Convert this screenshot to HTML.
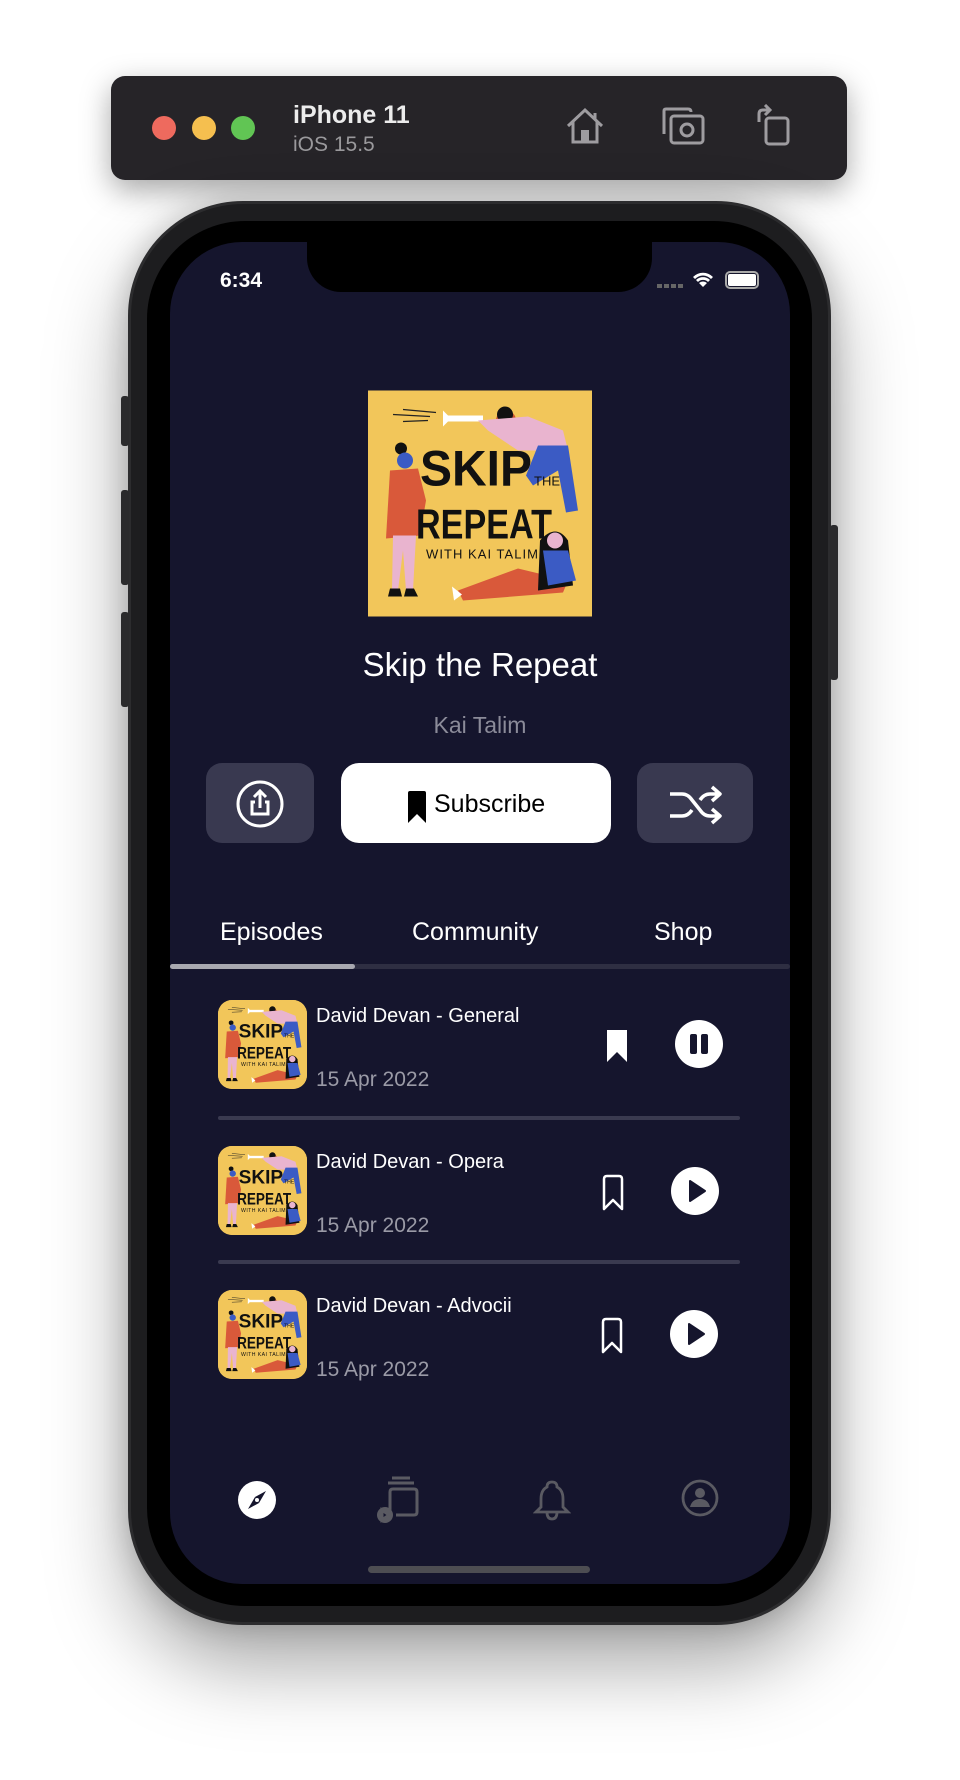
<!DOCTYPE html>
<html><head><meta charset="utf-8"><style>
*{margin:0;padding:0;box-sizing:border-box}
body{width:960px;height:1780px;background:#fff;position:relative;overflow:hidden;font-family:"Liberation Sans",sans-serif}
.abs{position:absolute}
.tb{left:111px;top:76px;width:736px;height:104px;background:#262428;border-radius:14px;box-shadow:0 10px 30px rgba(0,0,0,.35)}
.dot{width:24px;height:24px;border-radius:50%;top:116px}
.phone{left:128px;top:201px;width:703px;height:1424px;border-radius:115px;background:#1d1d1f;border:3px solid #2c2c2e;box-shadow:0 40px 80px rgba(0,0,0,.35),0 0 30px rgba(0,0,0,.2)}
.bez{left:147px;top:221px;width:665px;height:1385px;border-radius:98px;background:#000}
.scr{left:170px;top:242px;width:620px;height:1342px;border-radius:72px;background:#15152d;overflow:hidden}
.btn{background:#393950;border-radius:16px;top:763px;height:80px}
.t{color:#fff;white-space:nowrap}
.thumb{width:89px;height:89px;border-radius:14px;overflow:hidden;background:#f2c65a}
.ttl{font-size:20px;color:#fff}
.dt{font-size:21px;color:#9a9aa6}
.sep{left:218px;width:522px;height:4px;background:#3a3a50;border-radius:2px}
</style></head><body>
<svg width="0" height="0" style="position:absolute"><defs>
<symbol id="art" viewBox="0 0 224 226">
<rect width="224" height="226" fill="#f2c65a"/>
<g stroke="#222" stroke-width="1.2"><line x1="25" y1="24" x2="62" y2="26"/><line x1="35" y1="19" x2="68" y2="22"/><line x1="35" y1="31" x2="60" y2="30"/></g>
<path d="M75 20 L83 28 L75 36 Z" fill="#fff"/><rect x="80" y="25" width="35" height="6" fill="#fff"/>
<circle cx="138" cy="30" r="10" fill="#c9542e"/><circle cx="137" cy="24" r="8" fill="#111"/>
<path d="M110 30 L160 26 L195 40 L200 60 L150 60 L120 40Z" fill="#e9b4cf"/>
<path d="M170 55 L200 55 L210 120 L198 122 L190 80 L165 95 L158 85Z" fill="#3b5bc4"/>
<circle cx="33" cy="58" r="6" fill="#111"/><circle cx="37" cy="70" r="8" fill="#3b5bc4"/>
<path d="M22 80 L50 78 L58 110 L52 145 L18 148Z" fill="#d9593a"/>
<path d="M25 145 L48 145 L45 200 L38 200 L35 160 L30 200 L24 200Z" fill="#e9b4cf"/>
<path d="M22 198 L32 198 L34 206 L20 206Z M38 198 L46 198 L50 206 L36 206Z" fill="#111"/>
<text x="52" y="95" font-family="Liberation Sans,sans-serif" font-weight="bold" font-size="50" fill="#111" textLength="112" lengthAdjust="spacingAndGlyphs">SKIP</text>
<text x="166" y="95" font-family="Liberation Sans,sans-serif" font-size="13" fill="#111">THE</text>
<text x="48" y="148" font-family="Liberation Sans,sans-serif" font-weight="bold" font-size="42" fill="#111" textLength="136" lengthAdjust="spacingAndGlyphs">REPEAT</text>
<text x="58" y="168" font-family="Liberation Sans,sans-serif" font-size="13" fill="#111" textLength="112" lengthAdjust="spacing">WITH KAI TALIM</text>
<path d="M90 200 L150 178 L200 190 L195 202 L95 210Z" fill="#d9593a"/>
<path d="M172 150 Q188 132 200 150 L205 195 L170 200Z" fill="#111"/><circle cx="187" cy="150" r="8" fill="#e9b4cf"/>
<path d="M175 160 L200 160 L208 190 L180 195Z" fill="#3b5bc4"/>
<path d="M84 196 L94 204 L86 210Z" fill="#fff"/>
</symbol></defs></svg>

<div class="abs tb"></div>
<div class="abs dot" style="left:152px;background:#ee6a5e"></div>
<div class="abs dot" style="left:192px;background:#f5bf4f"></div>
<div class="abs dot" style="left:231px;background:#61c554"></div>
<div class="abs t" style="left:293px;top:101px;font-size:25px;font-weight:bold;color:#ececec">iPhone 11</div>
<div class="abs t" style="left:293px;top:133px;font-size:21px;color:#9a999c">iOS 15.5</div>
<svg class="abs" style="left:564px;top:105px" width="42" height="42" viewBox="0 0 42 42" fill="none" stroke="#9e9ca0" stroke-width="3"><path d="M4 21 L21 5 L38 21 M9 17 V37 H33 V17 M31 8 V15"/><rect x="17" y="25" width="8" height="12" fill="#9e9ca0" stroke="none"/></svg>
<svg class="abs" style="left:661px;top:106px" width="44" height="40" viewBox="0 0 44 40" fill="none" stroke="#9e9ca0" stroke-width="3"><path d="M3 28 V5 Q3 3 5 3 H27 Q30 3 30 6"/><rect x="10" y="10" width="32" height="27" rx="3"/><circle cx="26" cy="24" r="6"/></svg>
<svg class="abs" style="left:755px;top:104px" width="36" height="42" viewBox="0 0 36 42" fill="none" stroke="#9e9ca0" stroke-width="3"><rect x="11" y="14" width="22" height="26" rx="3"/><path d="M4 18 V10 Q4 6 8 6 H14 M10 1 L15 6 L10 11"/></svg>

<div class="abs phone"></div>
<div class="abs" style="left:121px;top:396px;width:8px;height:50px;background:#2a2a2c;border-radius:3px"></div>
<div class="abs" style="left:121px;top:490px;width:8px;height:95px;background:#2a2a2c;border-radius:3px"></div>
<div class="abs" style="left:121px;top:612px;width:8px;height:95px;background:#2a2a2c;border-radius:3px"></div>
<div class="abs" style="left:830px;top:525px;width:8px;height:155px;background:#2a2a2c;border-radius:3px"></div>
<div class="abs bez"></div>
<div class="abs scr"></div>
<div class="abs" style="left:307px;top:236px;width:345px;height:56px;background:#000;border-radius:0 0 34px 34px"></div>
<div class="abs t" style="left:220px;top:269px;font-size:21px;font-weight:bold">6:34</div>
<div class="abs" style="left:657px;top:284px;width:27px;height:4px;background:repeating-linear-gradient(90deg,#666 0 5px,transparent 5px 7px)"></div>
<svg class="abs" style="left:692px;top:271px" width="22" height="17" viewBox="0 0 22 17"><path d="M11 16 L7 12 A6 6 0 0 1 15 12Z M4 9 A10 10 0 0 1 18 9 L16 11 A7 7 0 0 0 6 11Z M1 6 A14 14 0 0 1 21 6 L19 8 A11 11 0 0 0 3 8Z" fill="#fff"/></svg>
<div class="abs" style="left:725px;top:271px;width:34px;height:18px;border:2px solid #aaa;border-radius:5px;padding:1px"><div style="width:100%;height:100%;background:#fff;border-radius:2px"></div></div>

<svg class="abs" style="left:368px;top:390px" width="224" height="227"><use href="#art"/></svg>
<div class="abs t" style="left:170px;width:620px;text-align:center;top:646px;font-size:33px">Skip the Repeat</div>
<div class="abs t" style="left:170px;width:620px;text-align:center;top:712px;font-size:23px;color:#8b8b99">Kai Talim</div>

<div class="abs btn" style="left:206px;width:108px"></div>
<svg class="abs" style="left:235px;top:779px" width="50" height="50" viewBox="0 0 50 50" fill="none" stroke="#fff" stroke-width="3"><circle cx="25" cy="25" r="22"/><path d="M25 12 V29 M19 18 L25 12 L31 18 M20 23 H17 V35 H33 V23 H30"/></svg>
<div class="abs" style="left:341px;top:763px;width:270px;height:80px;background:#fff;border-radius:18px"></div>
<svg class="abs" style="left:406px;top:790px" width="22" height="34" viewBox="0 0 22 34"><path d="M2 3 Q2 1 4 1 H18 Q20 1 20 3 V33 L11 24 L2 33Z" fill="#000"/></svg>
<div class="abs" style="left:434px;top:790px;font-size:25px;color:#000">Subscribe</div>
<div class="abs btn" style="left:637px;width:116px"></div>
<svg class="abs" style="left:668px;top:784px" width="56" height="42" viewBox="0 0 56 42" fill="none" stroke="#fff" stroke-width="3.5" stroke-linejoin="round"><path d="M2 10 H14 Q20 10 24 16 L32 26 Q36 32 42 32 H50 M2 32 H14 Q20 32 24 26 M32 16 Q36 10 42 10 H50 M44 3 L52 10 L44 17 M44 25 L52 32 L44 39"/></svg>

<div class="abs t" style="left:220px;top:918px;font-size:25px">Episodes</div>
<div class="abs t" style="left:412px;top:918px;font-size:25px">Community</div>
<div class="abs t" style="left:654px;top:918px;font-size:25px">Shop</div>
<div class="abs" style="left:170px;top:964px;width:620px;height:5px;background:#2e2e42;border-radius:3px"></div>
<div class="abs" style="left:170px;top:964px;width:185px;height:5px;background:#a8a8b0;border-radius:3px"></div>

<!-- row 1 -->
<div class="abs thumb" style="left:218px;top:1000px"><svg width="89" height="89" viewBox="0 0 224 226" preserveAspectRatio="none"><use href="#art"/></svg></div>
<div class="abs t ttl" style="left:316px;top:1005px">David Devan - General</div>
<div class="abs t dt" style="left:316px;top:1068px">15 Apr 2022</div>
<svg class="abs" style="left:606px;top:1028px" width="22" height="35" viewBox="0 0 22 35"><path d="M1 2 H21 V34 L11 24 L1 34Z" fill="#fff"/></svg>
<div class="abs" style="left:675px;top:1020px;width:48px;height:48px;border-radius:50%;background:#fff"></div>
<div class="abs" style="left:690px;top:1034px;width:7px;height:20px;background:#15152d;border-radius:2px"></div>
<div class="abs" style="left:701px;top:1034px;width:7px;height:20px;background:#15152d;border-radius:2px"></div>
<div class="abs sep" style="top:1116px"></div>

<!-- row 2 -->
<div class="abs thumb" style="left:218px;top:1146px"><svg width="89" height="89" viewBox="0 0 224 226" preserveAspectRatio="none"><use href="#art"/></svg></div>
<div class="abs t ttl" style="left:316px;top:1151px">David Devan - Opera</div>
<div class="abs t dt" style="left:316px;top:1214px">15 Apr 2022</div>
<svg class="abs" style="left:601px;top:1174px" width="24" height="38" viewBox="0 0 24 38" fill="none" stroke="#fff" stroke-width="2.5" stroke-linejoin="round"><path d="M3 5 Q3 2 6 2 H18 Q21 2 21 5 V35 L12 26 L3 35Z"/></svg>
<div class="abs" style="left:671px;top:1167px;width:48px;height:48px;border-radius:50%;background:#fff"></div>
<svg class="abs" style="left:671px;top:1167px" width="48" height="48"><path d="M19 14 L34 24 L19 34Z" fill="#15152d" stroke="#15152d" stroke-width="2" stroke-linejoin="round"/></svg>
<div class="abs sep" style="top:1260px"></div>

<!-- row 3 -->
<div class="abs thumb" style="left:218px;top:1290px"><svg width="89" height="89" viewBox="0 0 224 226" preserveAspectRatio="none"><use href="#art"/></svg></div>
<div class="abs t ttl" style="left:316px;top:1295px">David Devan - Advocii</div>
<div class="abs t dt" style="left:316px;top:1358px">15 Apr 2022</div>
<svg class="abs" style="left:600px;top:1317px" width="24" height="38" viewBox="0 0 24 38" fill="none" stroke="#fff" stroke-width="2.5" stroke-linejoin="round"><path d="M3 5 Q3 2 6 2 H18 Q21 2 21 5 V35 L12 26 L3 35Z"/></svg>
<div class="abs" style="left:670px;top:1310px;width:48px;height:48px;border-radius:50%;background:#fff"></div>
<svg class="abs" style="left:670px;top:1310px" width="48" height="48"><path d="M19 14 L34 24 L19 34Z" fill="#15152d" stroke="#15152d" stroke-width="2" stroke-linejoin="round"/></svg>

<!-- bottom nav -->
<svg class="abs" style="left:237px;top:1480px" width="40" height="40" viewBox="0 0 40 40"><circle cx="20" cy="20" r="19" fill="#fff"/><path d="M29 11 L22 23 L18 17Z" fill="#15152d"/><path d="M11 29 L18 17 L22 23Z" fill="#15152d"/><circle cx="20" cy="20" r="2" fill="#fff"/></svg>
<svg class="abs" style="left:374px;top:1475px" width="52" height="50" viewBox="0 0 52 50" fill="none" stroke="#5a5a62" stroke-width="3"><path d="M18 3 H36 M14 8 H40"/><path d="M16 40 V17 Q16 14 19 14 H40 Q43 14 43 17 V37 Q43 40 40 40 H22"/><circle cx="11" cy="40" r="8" fill="#5a5a62" stroke="none"/><path d="M8 35 L15 40 L8 45Z" fill="#15152d"/></svg>
<svg class="abs" style="left:533px;top:1479px" width="38" height="42" viewBox="0 0 38 42" fill="none" stroke="#5a5a62" stroke-width="2.8"><path d="M19 3 Q14 3 14 8 Q8 11 8 20 V28 L3 33 H35 L30 28 V20 Q30 11 24 8 Q24 3 19 3Z M14 33 Q14 40 19 40 Q24 40 24 33"/></svg>
<svg class="abs" style="left:680px;top:1478px" width="40" height="40" viewBox="0 0 40 40" fill="none" stroke="#5a5a62" stroke-width="2.8"><circle cx="20" cy="20" r="17"/><circle cx="20" cy="15" r="5" fill="#5a5a62" stroke="none"/><path d="M10 29 Q12 21 20 21 Q28 21 30 29Z" fill="#5a5a62" stroke="none"/></svg>
<div class="abs" style="left:368px;top:1566px;width:222px;height:7px;background:#4d4d52;border-radius:4px"></div>
</body></html>
